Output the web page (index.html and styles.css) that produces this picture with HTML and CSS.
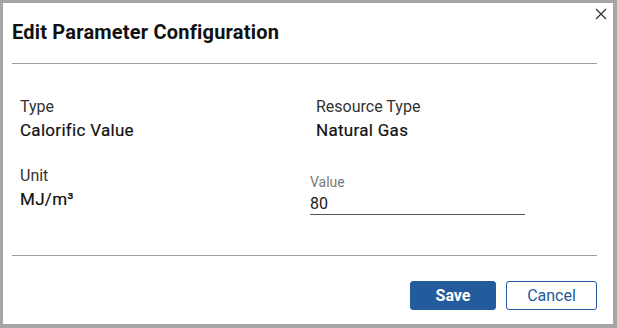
FILE: index.html
```html
<!DOCTYPE html>
<html lang="en">
<head>
  <meta charset="UTF-8" />
  <title>Edit Parameter Configuration</title>
  <link rel="stylesheet" href="styles.css">
</head>
<body>
  <div class="dialog">
    <button class="close-btn" aria-label="Close">
      <svg width="12" height="12" viewBox="0 0 12 12">
        <path d="M1 1 L11 11 M11 1 L1 11" stroke="#333" stroke-width="1.3" fill="none" />
      </svg>
    </button>

    <h2 class="dialog-title">Edit Parameter Configuration</h2>
    <hr class="divider">

    <div class="fields">
      <div class="field">
        <div class="field-label">Type</div>
        <div class="field-value">Calorific Value</div>
      </div>
      <div class="field">
        <div class="field-label">Resource Type</div>
        <div class="field-value">Natural Gas</div>
      </div>
      <div class="field">
        <div class="field-label">Unit</div>
        <div class="field-value">MJ/m³</div>
      </div>
      <div class="field input-field">
        <label class="input-label" for="paramValue">Value</label>
        <input id="paramValue" class="value-input" type="text" value="80" />
      </div>
    </div>

    <hr class="divider bottom">

    <div class="actions">
      <button class="btn btn-primary">Save</button>
      <button class="btn btn-outline">Cancel</button>
    </div>
  </div>
</body>
</html>
```

FILE: styles.css
```css
html, body {
  height: 100%;
}

body {
  margin: 0;
  background: #a6a6a6;
  font-family: Roboto, 'Liberation Sans', sans-serif;
  color: #1a1a1a;
  box-sizing: border-box;
  padding: 3px 4px 4px 3px;
}

.dialog {
  position: relative;
  background: #fff;
  height: 100%;
  display: flex;
  flex-direction: column;
}

.close-btn {
  position: absolute;
  top: 3px;
  right: 4px;
  width: 16px;
  height: 16px;
  padding: 2px;
  border: none;
  background: transparent;
  cursor: pointer;
}

.close-btn svg { display: block; }

.dialog-title {
  margin: 17px 0 0 9px;
  font-size: 20px;
  line-height: 24px;
  font-weight: 700;
  color: #111;
  letter-spacing: 0.2px;
}

.divider {
  margin: 19px 16px 0 9px;
  border: none;
  border-top: 1px solid #9e9e9e;
  height: 0;
}

.divider.bottom { margin-top: 0; }

.fields {
  display: grid;
  grid-template-columns: 296px 1fr;
  row-gap: 26px;
  padding: 33px 0 40px 17px;
}

.field-label {
  font-size: 16px;
  line-height: 20px;
  color: #333;
}

.field-value {
  margin-top: 3px;
  font-size: 17px;
  line-height: 20px;
  font-weight: 400;
  letter-spacing: 0.3px;
  -webkit-text-stroke: 0.2px #111;
  color: #111;
}

.input-field {
  margin-left: -6px;
  padding-top: 8px;
  width: 215px;
  display: flex;
  flex-direction: column;
}

.input-label {
  font-size: 14px;
  line-height: 16px;
  color: #7a7a7a;
}

.value-input {
  margin-top: 2px;
  padding: 0;
  border: none;
  border-bottom: 1px solid #555;
  font-family: inherit;
  font-size: 16px;
  line-height: 20px;
  height: 22px;
  color: #1a1a1a;
  outline: none;
}

.actions {
  display: flex;
  justify-content: flex-end;
  gap: 10px;
  padding: 25px 16px 0 0;
}

.btn {
  height: 29px;
  border-radius: 3px;
  font-family: inherit;
  font-size: 16px;
  cursor: pointer;
}

.btn-primary {
  width: 86px;
  background: #245b9c;
  border: 1px solid #245b9c;
  color: #fff;
  font-weight: 700;
}

.btn-outline {
  width: 91px;
  background: #fff;
  border: 1px solid #245b9c;
  color: #245b9c;
}
```
